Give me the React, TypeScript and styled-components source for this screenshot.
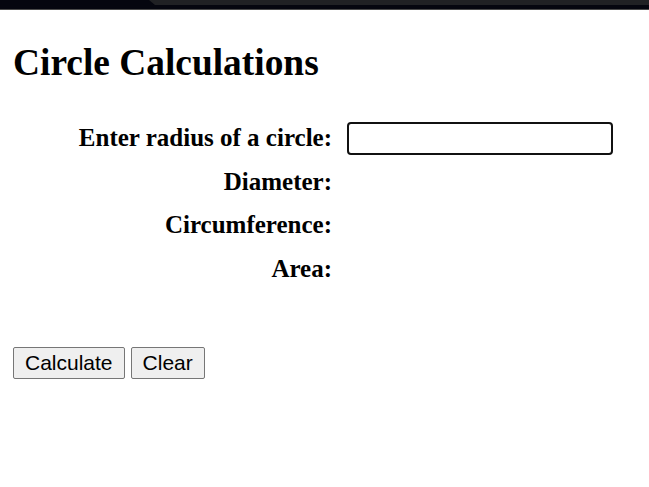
import React from "react";
import styled, { createGlobalStyle } from "styled-components";

const Global = createGlobalStyle`
  html, body { margin: 0; padding: 0; background: #ffffff; }
  body { font-family: "Liberation Serif", "Times New Roman", serif; color: #000; }
`;

const TopStrip = styled.div`
  height: 9px;
  background: #05060f;
  border-bottom: 1px solid #4a4a4a;
  display: flex;
  justify-content: flex-end;
`;

const TabShade = styled.div`
  width: 500px;
  height: 5px;
  background: #202124;
  clip-path: polygon(0 0, 100% 0, 100% 100%, 6px 100%);
`;

const Page = styled.main`
  padding: 0 13px;
`;

const Title = styled.h1`
  margin: 31px 0 32px;
  font-size: 37.4px;
  font-weight: bold;
  line-height: 1.15;
`;

const Form = styled.div`
  display: grid;
  grid-template-columns: 319px 266px;
  grid-auto-rows: 43.67px;
  column-gap: 15px;
  align-items: center;
`;

const Label = styled.label`
  font-size: 25px;
  font-weight: bold;
  text-align: right;
  line-height: normal;
`;

const Field = styled.input`
  box-sizing: border-box;
  width: 266px;
  height: 33px;
  margin-top: 2px;
  border: 2px solid #111;
  border-radius: 4px;
  outline: none;
  padding: 0 6px;
  font-size: 18px;
  font-family: "Liberation Sans", Arial, sans-serif;
`;

const Output = styled.span`
  font-size: 25px;
  font-family: "Liberation Serif", serif;
`;

const Actions = styled.div`
  display: flex;
  gap: 6px;
  margin-top: 56px;
`;

const Button = styled.button`
  box-sizing: border-box;
  height: 32px;
  padding: 0 11px;
  font-family: "Liberation Sans", Arial, sans-serif;
  font-size: 21px;
  color: #000;
  background: #efefef;
  border: 1px solid #767676;
  border-radius: 2px;
  cursor: pointer;
`;

export default function App() {
  const [radius, setRadius] = React.useState("");
  const [res, setRes] = React.useState<{ d: string; c: string; a: string } | null>(null);

  const calc = () => {
    const r = parseFloat(radius);
    if (isNaN(r)) return;
    setRes({
      d: (2 * r).toFixed(2),
      c: (2 * Math.PI * r).toFixed(2),
      a: (Math.PI * r * r).toFixed(2),
    });
  };

  return (
    <>
      <Global />
      <TopStrip>
        <TabShade />
      </TopStrip>
      <Page>
        <Title>Circle Calculations</Title>
        <Form>
          <Label htmlFor="radius">Enter radius of a circle:</Label>
          <Field id="radius" value={radius} onChange={(e) => setRadius(e.target.value)} />
          <Label>Diameter:</Label>
          <Output>{res?.d}</Output>
          <Label>Circumference:</Label>
          <Output>{res?.c}</Output>
          <Label>Area:</Label>
          <Output>{res?.a}</Output>
        </Form>
        <Actions>
          <Button onClick={calc}>Calculate</Button>
          <Button
            onClick={() => {
              setRadius("");
              setRes(null);
            }}
          >
            Clear
          </Button>
        </Actions>
      </Page>
    </>
  );
}
